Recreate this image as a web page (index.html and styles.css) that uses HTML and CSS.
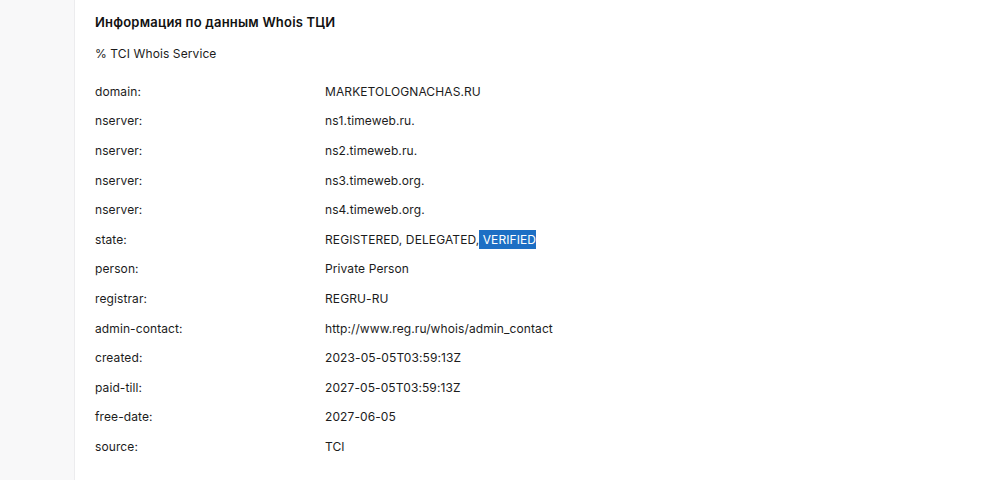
FILE: index.html
```html
<!DOCTYPE html>
<html lang="ru">
<head>
<meta charset="utf-8">
<link rel="stylesheet" href="styles.css">
</head>
<body>
<div class="page">
  <aside class="side"></aside>
  <main class="main">
    <h2 class="title">Информация по данным Whois ТЦИ</h2>
    <p class="service">% TCI Whois Service</p>
    <div class="rows">
      <div class="row"><span class="k">domain:</span><span class="v">MARKETOLOGNACHAS.RU</span></div>
      <div class="row"><span class="k">nserver:</span><span class="v">ns1.timeweb.ru.</span></div>
      <div class="row"><span class="k">nserver:</span><span class="v">ns2.timeweb.ru.</span></div>
      <div class="row"><span class="k">nserver:</span><span class="v">ns3.timeweb.org.</span></div>
      <div class="row"><span class="k">nserver:</span><span class="v">ns4.timeweb.org.</span></div>
      <div class="row"><span class="k">state:</span><span class="v">REGISTERED, DELEGATED,<span class="sel"> VERIFIED</span></span></div>
      <div class="row"><span class="k">person:</span><span class="v">Private Person</span></div>
      <div class="row"><span class="k">registrar:</span><span class="v">REGRU-RU</span></div>
      <div class="row"><span class="k">admin-contact:</span><span class="v">http://www.reg.ru/whois/admin_contact</span></div>
      <div class="row"><span class="k">created:</span><span class="v">2023-05-05T03:59:13Z</span></div>
      <div class="row"><span class="k">paid-till:</span><span class="v">2027-05-05T03:59:13Z</span></div>
      <div class="row"><span class="k">free-date:</span><span class="v">2027-06-05</span></div>
      <div class="row"><span class="k">source:</span><span class="v">TCI</span></div>
    </div>
  </main>
</div>
</body>
</html>
```
FILE: styles.css
```css
html, body {
  margin: 0;
  padding: 0;
  background: #ffffff;
}
body {
  font-family: Inter, "Noto Sans", sans-serif;
  color: #1c1c1c;
  font-size: 12px;
  letter-spacing: 0.1px;
}
.page {
  display: flex;
  min-height: 480px;
}
.side {
  width: 74px;
  flex: none;
  background: #f8f8f9;
  border-right: 1px solid #ececee;
}
.main {
  flex: 1;
  padding: 13px 0 0 20px;
}
.title {
  margin: 0;
  font-size: 13px;
  font-weight: 600;
  line-height: 18px;
  letter-spacing: 0.2px;
  color: #111;
}
.service {
  margin: 14px 0 0;
  line-height: 18px;
}
.rows {
  margin-top: 14px;
}
.row {
  display: grid;
  grid-template-columns: 230px 1fr;
  height: 29.6px;
  align-items: center;
  line-height: 18px;
}
.sel {
  background: #1d6fc4;
  color: #fff;
  padding: 2px 0;
}
```
